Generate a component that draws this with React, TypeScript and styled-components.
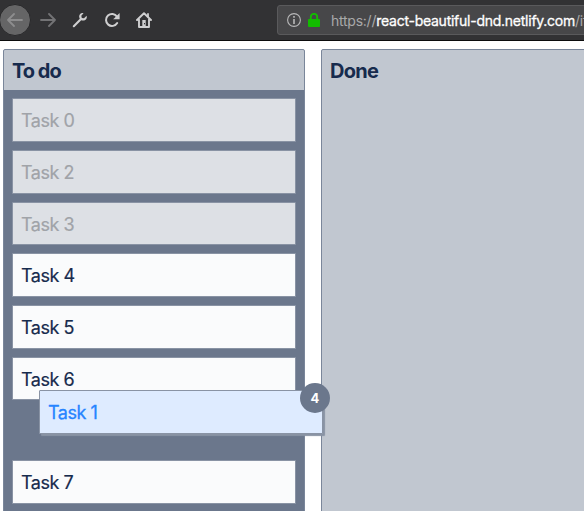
import React from 'react';
import styled, { createGlobalStyle, css } from 'styled-components';

const GlobalStyle = createGlobalStyle`
  * { box-sizing: border-box; }
  html, body { margin: 0; background: #fff; overflow: hidden; }
  body { font-family: Inter, "Liberation Sans", sans-serif; color: #172b4d; }
`;

const Page = styled.div`
  position: relative;
  width: 584px;
  height: 511px;
  overflow: hidden;
`;

const Toolbar = styled.header`
  display: flex;
  align-items: center;
  height: 41px;
  background: #323234;
  border-bottom: 1px solid #0c0c0d;
`;

const NavButton = styled.span<{ $width: number; $circle?: boolean }>`
  display: flex;
  flex: none;
  align-items: center;
  justify-content: center;
  width: ${(p) => p.$width}px;
  height: 32px;
  ${(p) =>
    p.$circle &&
    css`
      margin-left: -1px;
      border: 1px solid #28282a;
      border-radius: 50%;
      background: #656566;
    `}
  svg { display: block; flex: none; }
`;

const UrlBar = styled.div`
  display: flex;
  flex: none;
  align-items: center;
  width: 330px;
  height: 30px;
  margin-left: 118px;
  padding-left: 9px;
  border: 1px solid #5a5a5c;
  border-radius: 3px;
  background: #474749;
  svg { display: block; flex: none; }
`;

const Url = styled.span`
  margin-left: 11px;
  padding-top: 2px;
  color: #a9a9aa;
  font-size: 14px;
  line-height: 28px;
  white-space: nowrap;
  letter-spacing: -0.25px;
`;

const Domain = styled.span`
  color: #fff;
  -webkit-text-stroke: 0.3px #fff;
`;

const Board = styled.main`
  display: flex;
  gap: 16px;
  padding: 8px 0 0 3px;
`;

const Column = styled.section`
  flex: none;
  width: 302px;
  height: 480px;
  border: 1px solid #7a869a;
  border-radius: 2px;
  background: #c1c7d0;
`;

const Title = styled.h2<{ $spacing: number }>`
  height: 40px;
  margin: 0;
  padding-left: 8px;
  font-size: 20px;
  font-weight: 700;
  line-height: 43px;
  letter-spacing: ${(p) => p.$spacing}px;
`;

const TaskList = styled.div`
  display: flex;
  flex-direction: column;
  gap: 8px;
  height: 440px;
  padding: 8.2px 8px 0;
  background: #6b778c;
`;

const taskBox = css`
  flex: none;
  height: 43.7px;
  padding-left: 8px;
  border: 1px solid #8993a4;
  border-radius: 1px;
  font-size: 18px;
  line-height: 43px;
  letter-spacing: -0.48px;
`;

const Task = styled.div<{ $ghost?: boolean }>`
  ${taskBox}
  background: ${(p) => (p.$ghost ? '#dde0e5' : '#fafbfc')};
  color: ${(p) => (p.$ghost ? '#a0a3a8' : '#172b4d')};
  -webkit-text-stroke: 0.2px currentColor;
`;

const DropSpace = styled.div`
  flex: none;
  height: 43.7px;
`;

const DraggedTask = styled.div`
  ${taskBox}
  position: absolute;
  left: 39px;
  top: 390px;
  width: 284px;
  background: #deebff;
  color: #2684ff;
  box-shadow: 2px 2px 1px #8993a4;
  -webkit-text-stroke: 0.3px #2684ff;
`;

const CountBadge = styled.span`
  position: absolute;
  top: -8px;
  right: -8px;
  width: 30px;
  height: 30px;
  border-radius: 50%;
  background: #6b778c;
  color: #fff;
  font-size: 13px;
  font-weight: 700;
  line-height: 30px;
  text-align: center;
  letter-spacing: 0;
  -webkit-text-stroke: 0;
`;

const Arrow = ({ back, color }: { back?: boolean; color: string }) => (
  <svg width="16" height="14" viewBox="0 0 16 14" fill="none" stroke={color} strokeWidth="1.8" strokeLinecap="round" strokeLinejoin="round">
    <path d={back ? 'M15 7H1M7 1 1 7l6 6' : 'M1 7h14M9 1l6 6-6 6'} />
  </svg>
);

const Wrench = () => (
  <svg width="16" height="16" viewBox="0 0 16 16">
    <path d="M1.8 14.2 8.5 7.5" stroke="#cfcfd0" strokeWidth="2.1" strokeLinecap="round" />
    <path d="M11.5 1.2C8.7.5 6.5 3.1 7.4 5.7c.7 2.7 3.6 3.6 5.8 2.2 1.4-.8 2-2.5 1.4-4.2L12 6.2 9.8 5.9 9.3 3.8z" fill="#cfcfd0" />
  </svg>
);

const Reload = () => (
  <svg width="16" height="16" viewBox="0 0 16 16" fill="none">
    <path d="M13 4.6A6 6 0 1 0 13.2 11" stroke="#cfcfd0" strokeWidth="2" strokeLinecap="round" />
    <path d="M15.6 1v6.2H9.2z" fill="#cfcfd0" />
  </svg>
);

const Home = () => (
  <svg width="16" height="16" viewBox="0 0 16 16" fill="none" stroke="#cfcfd0">
    <path d="M1 8 8 1.3 15 8M3 7.5V15h10V7.5" strokeWidth="1.9" strokeLinecap="round" strokeLinejoin="round" />
    <path d="M8 8v6" strokeWidth="3.4" />
    <path d="M8.5 11v1.3" stroke="#323234" strokeWidth="1" />
    <path d="M12 1.3v4" strokeWidth="1.8" />
  </svg>
);

const Info = () => (
  <svg width="14" height="14" viewBox="0 0 14 14" fill="none" stroke="#b8b8b9">
    <circle cx="7" cy="7" r="6.4" strokeWidth="1.1" />
    <path d="M7 3v1.8M7 6.1v5" strokeWidth="1.6" />
  </svg>
);

const LockIcon = styled.svg`
  margin-left: 7px;
`;

const Lock = () => (
  <LockIcon width="12" height="14" viewBox="0 0 12 14">
    <rect y="6" width="12" height="8" rx="1" fill="#12bc00" />
    <path d="M2.8 7V4a3.2 3.2 0 0 1 6.4 0v3" fill="none" stroke="#12bc00" strokeWidth="1.9" />
  </LockIcon>
);

export default function App() {
  return (
    <>
      <GlobalStyle />
      <Page>
        <Toolbar>
          <NavButton $width={32} $circle><Arrow back color="#8d8d8e" /></NavButton>
          <NavButton $width={34}><Arrow color="#737375" /></NavButton>
          <NavButton $width={30}><Wrench /></NavButton>
          <NavButton $width={34}><Reload /></NavButton>
          <NavButton $width={30}><Home /></NavButton>
          <UrlBar>
            <Info />
            <Lock />
            <Url>https://<Domain>react-beautiful-dnd.netlify.com</Domain>/if</Url>
          </UrlBar>
        </Toolbar>
        <Board>
          <Column>
            <Title $spacing={-1}>To do</Title>
            <TaskList>
              <Task $ghost>Task 0</Task>
              <Task $ghost>Task 2</Task>
              <Task $ghost>Task 3</Task>
              <Task>Task 4</Task>
              <Task>Task 5</Task>
              <Task>Task 6</Task>
              <DropSpace />
              <Task>Task 7</Task>
            </TaskList>
          </Column>
          <Column>
            <Title $spacing={-0.7}>Done</Title>
          </Column>
        </Board>
        <DraggedTask>
          Task 1
          <CountBadge>4</CountBadge>
        </DraggedTask>
      </Page>
    </>
  );
}
